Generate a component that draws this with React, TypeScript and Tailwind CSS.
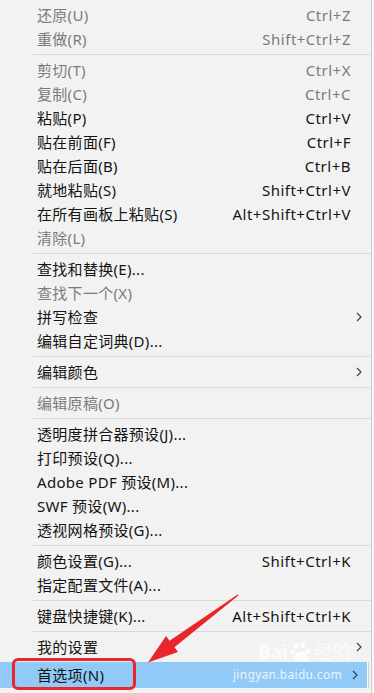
type Item = {
  label: string;
  shortcut?: string;
  disabled?: boolean;
  sub?: boolean;
};

type Entry = Item | 'sep';

const menu: Entry[] = [
  { label: '还原(U)', shortcut: 'Ctrl+Z', disabled: true },
  { label: '重做(R)', shortcut: 'Shift+Ctrl+Z', disabled: true },
  'sep',
  { label: '剪切(T)', shortcut: 'Ctrl+X', disabled: true },
  { label: '复制(C)', shortcut: 'Ctrl+C', disabled: true },
  { label: '粘贴(P)', shortcut: 'Ctrl+V' },
  { label: '贴在前面(F)', shortcut: 'Ctrl+F' },
  { label: '贴在后面(B)', shortcut: 'Ctrl+B' },
  { label: '就地粘贴(S)', shortcut: 'Shift+Ctrl+V' },
  { label: '在所有画板上粘贴(S)', shortcut: 'Alt+Shift+Ctrl+V' },
  { label: '清除(L)', disabled: true },
  'sep',
  { label: '查找和替换(E)...' },
  { label: '查找下一个(X)', disabled: true },
  { label: '拼写检查', sub: true },
  { label: '编辑自定词典(D)...' },
  'sep',
  { label: '编辑颜色', sub: true },
  'sep',
  { label: '编辑原稿(O)', disabled: true },
  'sep',
  { label: '透明度拼合器预设(J)...' },
  { label: '打印预设(Q)...' },
  { label: 'Adobe PDF 预设(M)...' },
  { label: 'SWF 预设(W)...' },
  { label: '透视网格预设(G)...' },
  'sep',
  { label: '颜色设置(G)...', shortcut: 'Shift+Ctrl+K' },
  { label: '指定配置文件(A)...' },
  'sep',
  { label: '键盘快捷键(K)...', shortcut: 'Alt+Shift+Ctrl+K' },
  'sep',
  { label: '我的设置', sub: true },
];

function Chevron({ color = '#3c3c3c' }: { color?: string }) {
  return (
    <svg width="6" height="10" viewBox="0 0 6 10" fill="none">
      <path d="M1 1 L5 5 L1 9" stroke={color} strokeWidth="1.1" />
    </svg>
  );
}

function Row({ item }: { item: Item }) {
  const tone = item.disabled ? 'text-[#7b7b7b]' : 'text-[#141414]';
  return (
    <div className={`flex h-[24px] items-center pl-[37px] ${tone}`}>
      <span className="flex-1 whitespace-nowrap tracking-[0.3px]">
        {item.label}
      </span>
      {item.shortcut && (
        <span className="whitespace-nowrap tracking-[0.5px]">
          {item.shortcut}
        </span>
      )}
      <span className="flex w-[20px] justify-start pl-[5px]">
        {item.sub && <Chevron />}
      </span>
    </div>
  );
}

export default function App() {
  return (
    <div
      className="relative h-[693px] w-[374px] overflow-hidden bg-[#fafafa] text-[15px] leading-none"
      style={{ fontFamily: '"Noto Sans", "Noto Sans CJK SC", sans-serif' }}
    >
      <div className="flex h-full w-[372px] flex-col border-r border-[#cdcdcd] bg-[#f2f2f2] pt-[3px]">
        {menu.map((entry, i) =>
          entry === 'sep' ? (
            <div key={i} className="flex h-[7px] items-center pl-[33px]">
              <div className="h-px w-full bg-[#d9d9d9]" />
            </div>
          ) : (
            <Row key={i} item={entry} />
          ),
        )}

        {/* highlighted item */}
        <div className="mt-[3px] flex h-[26px] items-center text-[#141414]">
          <div className="flex h-full w-[367px] items-center bg-[#91c9f7] pl-[37px]">
            <span className="flex-1 tracking-[0.3px]">首选项(N)</span>
            <span className="mr-[10px] text-[12px] tracking-[0.3px] text-white/80">
              jingyan.baidu.com
            </span>
            <span className="flex w-[15px]">
              <Chevron color="#2c3e55" />
            </span>
          </div>
          <div className="h-full w-px bg-[#fdfdfd]" />
          <div className="h-full w-px bg-[#d0d0d0]" />
        </div>
      </div>

      {/* watermark */}
      <div className="absolute left-[258px] top-[641px] flex items-center gap-[2px] text-[19px] font-bold text-white/75">
        <span>Bai</span>
        <svg width="22" height="22" viewBox="0 0 22 22">
          <g fill="rgba(255,255,255,0.8)">
            <ellipse cx="6" cy="5" rx="2.5" ry="3" />
            <ellipse cx="13" cy="4" rx="2.5" ry="3" />
            <ellipse cx="3" cy="11" rx="2.2" ry="2.6" />
            <ellipse cx="18" cy="10" rx="2.2" ry="2.6" />
            <path d="M4 19 C4 13 8 10 11 10 C14 10 18 13 18 19 C18 21 15 21 11 20 C7 21 4 21 4 19 Z" />
          </g>
        </svg>
        <span className="font-normal">经验</span>
      </div>

      {/* annotation: red box */}
      <div className="absolute left-[12px] top-[658px] h-[32px] w-[124px] rounded-[6px] border-[3px] border-[#e8262b]" />

      {/* annotation: red arrow */}
      <svg
        className="absolute left-0 top-0"
        width="374"
        height="693"
        viewBox="0 0 374 693"
      >
        <polygon
          points="238.4,595.6 174.4,647.2 178,652 148,662.5 166,636 169.6,640.8 237.6,594.4"
          fill="#e8262b"
        />
      </svg>
    </div>
  );
}
